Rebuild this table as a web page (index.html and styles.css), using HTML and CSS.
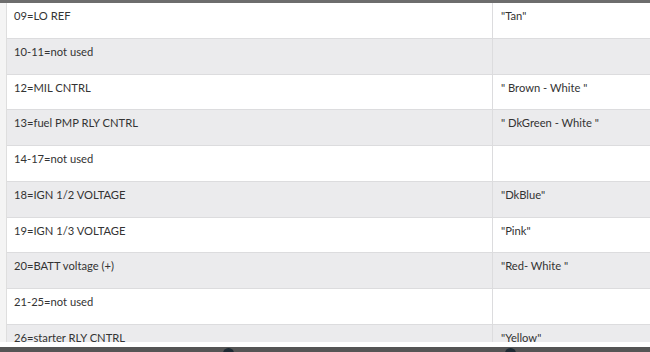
FILE: index.html
```html
<!DOCTYPE html>
<html>
<head>
<meta charset="utf-8">
<link rel="stylesheet" href="styles.css">
</head>
<body>
<div class="page">
  <div class="topbar"></div>
  <div class="frame">
    <div class="pins">
      <div class="row"><div class="c1">09=LO REF</div><div class="c2">"Tan"</div></div>
      <div class="row alt"><div class="c1">10-11=not used</div><div class="c2"></div></div>
      <div class="row"><div class="c1">12=MIL CNTRL</div><div class="c2">" Brown - White "</div></div>
      <div class="row alt"><div class="c1">13=fuel PMP RLY CNTRL</div><div class="c2">" DkGreen - White "</div></div>
      <div class="row"><div class="c1">14-17=not used</div><div class="c2"></div></div>
      <div class="row alt"><div class="c1">18=IGN 1/2 VOLTAGE</div><div class="c2">"DkBlue"</div></div>
      <div class="row"><div class="c1">19=IGN 1/3 VOLTAGE</div><div class="c2">"Pink"</div></div>
      <div class="row alt"><div class="c1">20=BATT voltage (+)</div><div class="c2">"Red- White "</div></div>
      <div class="row"><div class="c1">21-25=not used</div><div class="c2"></div></div>
      <div class="row alt"><div class="c1">26=starter RLY CNTRL</div><div class="c2">"Yellow"</div></div>
    </div>
  </div>
  <div class="gap"></div>
  <div class="bottombar">
    <span class="knob k1"></span>
    <span class="knob k2"></span>
  </div>
</div>
</body>
</html>
```
FILE: styles.css
```css
html, body {
  margin: 0;
  padding: 0;
  background: #ffffff;
}
.page {
  width: 650px;
  height: 352px;
  overflow: hidden;
  display: flex;
  flex-direction: column;
  font-family: "Lato", "Open Sans", sans-serif;
  font-size: 11.2px;
  color: #333333;
}
.topbar {
  height: 3px;
  flex: none;
  background: #6d6d6d;
}
.frame {
  height: 339px;
  flex: none;
  overflow: hidden;
  background: #f4f4f4;
  padding-left: 6px;
}
.pins {
  width: 643px;
  border-left: 1px solid #dedede;
  border-right: 1px solid #dedede;
  background: #ffffff;
  display: flex;
  flex-direction: column;
}
.row {
  height: 35.75px;
  flex: none;
  display: grid;
  grid-template-columns: 486px 1fr;
  border-bottom: 1px solid #dcdcde;
  box-sizing: border-box;
  line-height: 14px;
}
.row.alt {
  background: #ebebed;
}
.c1 {
  padding: 6px 7px 0 7px;
  border-right: 1px solid #dcdcde;
}
.c2 {
  padding: 6px 7px 0 8px;
}
.gap {
  height: 5px;
  flex: none;
  background: #ffffff;
}
.bottombar {
  flex: 1;
  background: #555555;
  position: relative;
}
.knob {
  position: absolute;
  top: 1px;
  width: 11px;
  height: 11px;
  border-radius: 50%;
  background: #1e2a33;
}
.k1 { left: 223px; }
.k2 { left: 505px; }
```
